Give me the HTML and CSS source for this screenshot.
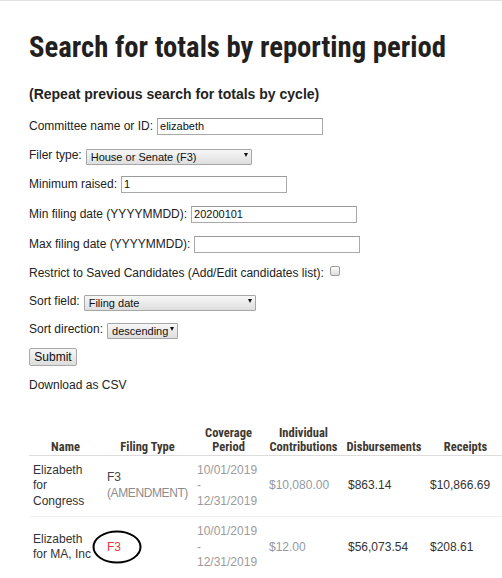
FILE: index.html
```html
<!DOCTYPE html>
<html lang="en">
<head>
<meta charset="utf-8">
<title>Search for totals by reporting period</title>
<link rel="stylesheet" href="styles.css">
</head>
<body>
<main class="page">
  <h1 class="title">Search for totals by reporting period</h1>
  <h3 class="subtitle">(Repeat previous search for totals by cycle)</h3>

  <form class="search-form">
    <div class="row tall">
      <label class="label">Committee name or ID:</label>
      <input class="text-input" type="text" value="elizabeth">
    </div>
    <div class="row">
      <label class="label">Filer type:</label>
      <span class="select-wrap w-filer"><select class="select"><option>House or Senate (F3)</option></select></span>
    </div>
    <div class="row tall">
      <label class="label">Minimum raised:</label>
      <input class="text-input" type="text" value="1">
    </div>
    <div class="row tall">
      <label class="label">Min filing date (YYYYMMDD):</label>
      <input class="text-input" type="text" value="20200101">
    </div>
    <div class="row tall">
      <label class="label">Max filing date (YYYYMMDD):</label>
      <input class="text-input" type="text" value="">
    </div>
    <div class="row">
      <label class="label">Restrict to Saved Candidates (Add/Edit candidates list):</label>
      <input class="checkbox" type="checkbox">
    </div>
    <div class="row">
      <label class="label">Sort field:</label>
      <span class="select-wrap w-sort"><select class="select"><option>Filing date</option></select></span>
    </div>
    <div class="row">
      <label class="label">Sort direction:</label>
      <span class="select-wrap w-dir"><select class="select"><option>descending</option></select></span>
    </div>
    <div class="row">
      <button class="button" type="button">Submit</button>
    </div>
    <div class="row">
      <span class="label">Download as CSV</span>
    </div>
  </form>

  <div class="results">
    <table class="totals">
      <colgroup>
        <col class="c-name"><col class="c-type"><col class="c-cov"><col class="c-ind"><col class="c-dis"><col class="c-rec">
      </colgroup>
      <thead>
        <tr>
          <th>Name</th>
          <th>Filing Type</th>
          <th>Coverage Period</th>
          <th>Individual Contributions</th>
          <th>Disbursements</th>
          <th>Receipts</th>
        </tr>
      </thead>
      <tbody>
        <tr>
          <td class="name">Elizabeth for Congress</td>
          <td class="type">F3<br><span class="amend">(AMENDMENT)</span></td>
          <td class="muted">10/01/2019<br>-<br>12/31/2019</td>
          <td class="indiv">$10,080.00</td>
          <td>$863.14</td>
          <td>$10,866.69</td>
        </tr>
        <tr>
          <td class="name">Elizabeth for MA, Inc</td>
          <td class="type"><span class="circled">F3<svg class="ring" width="50" height="34" viewBox="0 0 50 34" aria-hidden="true"><ellipse cx="25" cy="17" rx="23.5" ry="15.5" fill="none" stroke="#000" stroke-width="2"/></svg></span></td>
          <td class="muted">10/01/2019<br>-<br>12/31/2019</td>
          <td class="indiv">$12.00</td>
          <td>$56,073.54</td>
          <td>$208.61</td>
        </tr>
      </tbody>
    </table>
  </div>
</main>
</body>
</html>
```
FILE: styles.css
```css
html, body {
  margin: 0;
  padding: 0;
  overflow: hidden;
  background: #fff;
}

body {
  border-top: 1px solid #e2e2e2;
  font-family: "Liberation Sans", Arial, sans-serif;
  color: #222;
}

.page {
  padding: 0 0 0 29px;
}

.title {
  margin: 28px 0 0;
  font-family: "Roboto Condensed", "Liberation Sans Narrow", "DejaVu Sans Condensed", sans-serif;
  font-stretch: condensed;
  font-weight: bold;
  font-size: 28.7px;
  line-height: 36px;
  color: #231f20;
  white-space: nowrap;
}

.subtitle {
  margin: 21px 0 0;
  font-family: "Liberation Sans", Arial, sans-serif;
  font-weight: bold;
  font-size: 14px;
  line-height: 17px;
  color: #222;
}

.search-form {
  margin-top: 13px;
  display: flex;
  flex-direction: column;
  gap: 10px;
}

.row {
  height: 18px;
  display: flex;
  align-items: center;
  gap: 4px;
}

.row.tall {
  height: 20px;
}

.label {
  font-size: 12px;
  line-height: 14px;
  color: #222;
  white-space: nowrap;
}

.text-input {
  box-sizing: border-box;
  width: 166px;
  height: 17px;
  margin: 0;
  padding: 0 2px;
  border: 1px solid #a9a9a9;
  border-top-color: #9a9a9a;
  background: #fff;
  font-family: "Liberation Sans", Arial, sans-serif;
  font-size: 11px;
  color: #111;
  outline: none;
}

.select-wrap {
  position: relative;
  display: inline-block;
  height: 16px;
}

.select-wrap::after {
  content: "";
  position: absolute;
  top: 6px;
  right: 4px;
  border-left: 2.5px solid transparent;
  border-right: 2.5px solid transparent;
  border-top: 4px solid #111;
  pointer-events: none;
}

.w-filer { width: 166px; }
.w-sort { width: 172px; }
.w-dir { width: 71px; }

.select {
  appearance: none;
  -webkit-appearance: none;
  box-sizing: border-box;
  width: 100%;
  height: 16px;
  margin: 0;
  padding: 0 8px 0 4px;
  border: 1px solid #a6a6a6;
  border-radius: 1px;
  background: linear-gradient(#f7f7f7, #dedede);
  font-family: "Liberation Sans", Arial, sans-serif;
  font-size: 11px;
  line-height: 14px;
  color: #111;
}

.checkbox {
  appearance: none;
  -webkit-appearance: none;
  box-sizing: border-box;
  width: 10px;
  height: 10px;
  margin: 0 0 4px 2px;
  border: 1px solid #9c9c9c;
  border-radius: 2px;
  background: linear-gradient(#fdfdfd, #dcdcdc);
}

.button {
  box-sizing: border-box;
  width: 48px;
  height: 18px;
  margin: 0;
  padding: 0;
  border: 1px solid #a9a9a9;
  border-radius: 2px;
  background: linear-gradient(#f6f6f6, #dddddd);
  font-family: "Liberation Sans", Arial, sans-serif;
  font-size: 12px;
  color: #111;
}

.results {
  margin-top: 30px;
  overflow: hidden;
}

.totals {
  border-collapse: collapse;
  table-layout: fixed;
  width: 477px;
}

.c-name { width: 73px; }
.c-type { width: 91px; }
.c-cov { width: 71px; }
.c-ind { width: 79px; }
.c-dis { width: 82px; }
.c-rec { width: 81px; }

.totals th {
  padding: 2px 2px;
  border-bottom: 1px solid #dcdcdc;
  vertical-align: bottom;
  text-align: center;
  font-family: "Roboto Condensed", "Liberation Sans Narrow", "DejaVu Sans Condensed", sans-serif;
  font-stretch: condensed;
  font-weight: bold;
  font-size: 12.5px;
  line-height: 13.5px;
  color: #3e3830;
}

.totals td {
  padding: 6.5px 3px 6.5px 5px;
  vertical-align: middle;
  text-align: left;
  font-size: 12px;
  line-height: 15.75px;
  color: #333;
  border-bottom: 1px solid #efefef;
}

.totals td.name {
  padding-left: 4px;
}

.totals tbody tr:last-child td {
  border-bottom: none;
}

.totals td.type {
  color: #444;
}

.amend {
  color: #8c8c8c;
  letter-spacing: -0.4px;
}

.totals td.muted {
  color: #9b9b9b;
  padding-left: 4px;
}

.totals td.indiv {
  color: #939aa2;
}

.circled {
  position: relative;
  display: inline-block;
  color: #e53a3f;
}

.ring {
  position: absolute;
  left: -15px;
  top: -10px;
}
```
